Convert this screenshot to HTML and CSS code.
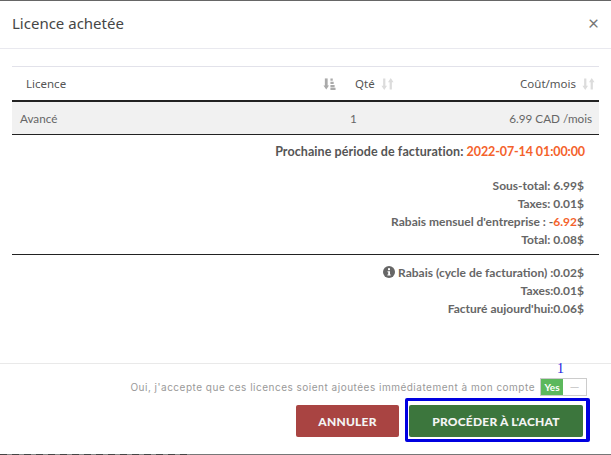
FILE: index.html
```html
<!DOCTYPE html>
<html lang="fr">
<head>
  <meta charset="UTF-8" />
  <title>Licence achetée</title>
  <link rel="stylesheet" href="styles.css">
</head>
<body>

<div class="modal">
  <header class="modal-header">
    <h1>Licence achetée</h1>
    <span class="modal-close">&times;</span>
  </header>

  <div class="modal-body">
    <table class="licence-table">
      <thead>
        <tr>
          <th class="col-name">
            <div class="th-inner"><span>Licence</span>
              <svg class="sort sort-on" viewBox="0 0 14 14"><path d="M3.500 1v9" fill="none" stroke="currentColor" stroke-width="3"/><path d="M0.500 8.500h6L3.500 13zM8 1h2.500v2.400H8zM8 4.500h3.500v2.400H8zM8 8h4.500v2.400H8zM8 11h5.500v2.400H8z" fill="currentColor"/></svg>
            </div>
          </th>
          <th class="col-qty">
            <div class="th-inner"><span>Qté</span>
              <svg class="sort" viewBox="0 0 14 14"><path d="M3.500 1v9M10.500 13V4" fill="none" stroke="currentColor" stroke-width="2.400"/><path d="M0.500 9h6L3.500 13.500zM7.500 5h6L10.500 0.500z" fill="currentColor"/></svg>
            </div>
          </th>
          <th class="col-cost">
            <div class="th-inner th-right"><span>Coût/mois</span>
              <svg class="sort" viewBox="0 0 14 14"><path d="M3.500 1v9M10.500 13V4" fill="none" stroke="currentColor" stroke-width="2.400"/><path d="M0.500 9h6L3.500 13.500zM7.500 5h6L10.500 0.500z" fill="currentColor"/></svg>
            </div>
          </th>
        </tr>
      </thead>
      <tbody>
        <tr>
          <td class="col-name">Avancé</td>
          <td class="col-qty">1</td>
          <td class="col-cost">6.99 CAD /mois</td>
        </tr>
      </tbody>
    </table>

    <p class="next-billing">Prochaine période de facturation: <span class="orange">2022-07-14 01:00:00</span></p>

    <div class="totals">
      <p>Sous-total: 6.99$</p>
      <p>Taxes: 0.01$</p>
      <p>Rabais mensuel d'entreprise : -<span class="orange">6.92</span>$</p>
      <p>Total: 0.08$</p>
    </div>

    <hr class="divider">

    <div class="totals">
      <p><svg class="info" viewBox="0 0 12 12"><circle cx="6" cy="6" r="6" fill="currentColor"/><rect x="5" y="2.200" width="2" height="2" fill="#fff"/><path d="M4.500 5.200H7v3.400h.7v1H4.400v-1h.8V6.200h-.7z" fill="#fff"/></svg> Rabais (cycle de facturation) :0.02$</p>
      <p>Taxes:0.01$</p>
      <p>Facturé aujourd'hui:0.06$</p>
    </div>
  </div>

  <footer class="modal-footer">
    <div class="accept-row">
      <span class="accept-label">Oui, j'accepte que ces licences soient ajoutées immédiatement à mon compte</span>
      <div class="switch">
        <span class="step-badge">1</span>
        <span class="switch-on">Yes</span>
        <span class="switch-off">&mdash;</span>
      </div>
    </div>
    <div class="actions">
      <button class="btn btn-cancel">Annuler</button>
      <div class="highlight"><button class="btn btn-buy">Procéder à l'achat</button></div>
    </div>
  </footer>
</div>

<div class="page-behind"></div>

</body>
</html>
```

FILE: styles.css
```css
html, body {
  margin: 0;
  padding: 0;
  height: 455px;
  overflow: hidden;
}
body {
  font-family: "Lato", sans-serif;
  background: #fff;
  color: #555;
  border-top: 1px solid #666;
  box-sizing: border-box;
}

.modal {
  display: flex;
  flex-direction: column;
  height: 453px;
}

/* Header */
.modal-header {
  height: 48px;
  box-sizing: border-box;
  padding: 0 12px 4px 12px;
  border-bottom: 1px solid #e9e9ef;
  display: flex;
  align-items: center;
  justify-content: space-between;
}
.modal-header h1 {
  margin: 0;
  font-family: "Noto Sans", sans-serif;
  font-size: 15px;
  font-weight: 400;
  color: #464646;
}
.modal-close {
  font-size: 19px;
  color: #777;
  line-height: 1;
}

/* Body */
.modal-body {
  flex: 1;
  padding: 17px 12px 0;
}
.licence-table {
  width: 100%;
  border-collapse: collapse;
  font-size: 11.700px;
  table-layout: fixed;
}
.licence-table th {
  height: 33px;
  padding: 0;
  border-top: 1px solid #e2e2ea;
  border-bottom: 2px solid #222;
  font-family: "Noto Sans", sans-serif;
  font-size: 11.500px;
  font-weight: 400;
  color: #555;
}
.licence-table td {
  height: 32px;
  padding: 0;
  background: #f1f1f1;
  border-bottom: 1px solid #222;
  color: #666;
}
.th-inner {
  display: flex;
  align-items: center;
  justify-content: space-between;
}
.th-right {
  justify-content: flex-end;
  gap: 6px;
}
.col-name { width: 312px; }
.licence-table th.col-name { padding-left: 14px; }
.licence-table th.col-name .th-inner { padding-right: 2px; }
.licence-table td.col-name { padding-left: 8px; }
.licence-table th.col-qty { width: 70px; padding-left: 17px; }
.licence-table th.col-qty .th-inner { justify-content: flex-start; gap: 6px; }
.licence-table td.col-qty { padding-left: 12px; }
.licence-table th.col-cost { padding-right: 4px; }
.licence-table td.col-cost { text-align: right; padding-right: 7px; }

.sort {
  width: 13px;
  height: 14px;
  color: #dcdcdc;
}
.sort-on { color: #aaa; }

.next-billing {
  margin: 9px 14px 0 0;
  text-align: right;
  font-size: 12.500px;
  font-weight: 700;
  letter-spacing: 0.080px;
  color: #555;
}
.orange { color: #f4622b; }
.next-billing .orange { letter-spacing: -0.100px; }

.totals {
  font-size: 12px;
  font-weight: 700;
  color: #666;
  text-align: right;
  padding-right: 15px;
}
.totals p {
  margin: 0;
  line-height: 18px;
}
.next-billing + .totals { margin-top: 18px; }
.divider {
  border: none;
  border-top: 1px solid #222;
  margin: 5px 0 9px;
}
.info {
  width: 12px;
  height: 12px;
  vertical-align: -1px;
}

/* Footer */
.modal-footer {
  border-top: 1px solid #e9e9e9;
  height: 91px;
  box-sizing: border-box;
  padding: 14px 24px 0 0;
}
.accept-row {
  display: flex;
  justify-content: flex-end;
  align-items: center;
  gap: 5px;
}
.accept-label {
  font-family: "Inter", sans-serif;
  font-size: 10px;
  letter-spacing: 0.500px;
  color: #999;
}
.switch {
  display: flex;
  width: 47px;
  height: 18px;
  border: 1px solid #ccc;
  box-sizing: border-box;
  position: relative;
}
.step-badge {
  position: absolute;
  top: -18px;
  left: 16px;
  font-family: "Liberation Serif", serif;
  font-size: 14px;
  color: #1a1ae0;
}
.switch-on {
  width: 22px;
  background: #5cb85c;
  color: #fff;
  font-size: 10px;
  font-weight: 700;
  text-align: center;
  line-height: 16px;
}
.switch-off {
  flex: 1;
  text-align: center;
  color: #ccc;
  font-size: 12px;
  font-weight: 700;
  line-height: 15px;
}
.actions {
  display: flex;
  justify-content: flex-end;
  align-items: flex-start;
  gap: 6px;
  margin: 2px -3px 0 0;
}
.btn-cancel { margin-top: 7px; }
.highlight {
  border-style: solid;
  border-color: #0000e0;
  border-width: 3px 4px 3px 3px;
  border-radius: 2px;
  padding: 4px 3px 2px 1px;
  display: flex;
}
.btn {
  border: none;
  border-radius: 2px;
  height: 32px;
  color: #f4f4f4;
  font-family: "Lato", sans-serif;
  font-size: 12px;
  font-weight: 900;
  letter-spacing: 0.200px;
  text-transform: uppercase;
}
.btn-cancel {
  width: 103px;
  background: #a94442;
}
.btn-buy {
  width: 174px;
  background: #3c763d;
}

/* Sliver of the page behind the dialog */
.page-behind {
  height: 1px;
  background: repeating-linear-gradient(90deg, #444 0 7px, #888 7px 12px) 0 0 / 190px 1px no-repeat #777;
}
```
